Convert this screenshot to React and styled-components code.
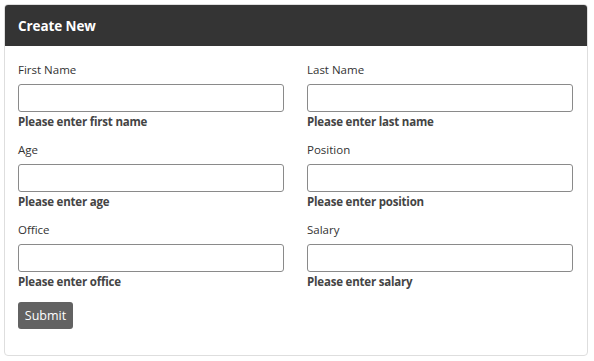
import React from "react";
import styled, { createGlobalStyle } from "styled-components";

const GlobalStyle = createGlobalStyle`
  body {
    margin: 0;
    background: #ffffff;
    font-family: "Open Sans", "Noto Sans", sans-serif;
  }
`;

const Card = styled.div`
  margin: 4px 0 0 4px;
  width: 584px;
  height: 352px;
  box-sizing: border-box;
  border: 1px solid #dedede;
  border-radius: 4px;
  overflow: hidden;
`;

const Header = styled.div`
  height: 41px;
  background: #343434;
  color: #ffffff;
  font-size: 13.5px;
  font-weight: 700;
  letter-spacing: -0.1px;
  display: flex;
  align-items: center;
  padding-left: 13px;
`;

const Body = styled.form`
  padding: 15px 14px 0 13px;
`;

const Grid = styled.div`
  display: grid;
  grid-template-columns: 266px 266px;
  column-gap: 23px;
  row-gap: 11px;
`;

const Field = styled.div`
  display: flex;
  flex-direction: column;
`;

const Label = styled.label`
  font-size: 11.5px;
  line-height: 18px;
  color: #333333;
  margin-bottom: 5px;
`;

const Input = styled.input`
  height: 28px;
  box-sizing: border-box;
  border: 1px solid #8a8a8a;
  border-radius: 3px;
  background: #ffffff;
  font-family: inherit;
  outline: none;
`;

const Error = styled.span`
  font-size: 11.5px;
  line-height: 18px;
  font-weight: 700;
  letter-spacing: -0.2px;
  color: #444444;
  padding-top: 1px;
  margin-bottom: -1px;
`;

const Button = styled.button`
  margin-top: 12px;
  width: 55px;
  height: 27px;
  background: #626262;
  color: #ffffff;
  border: none;
  border-radius: 3px;
  font-family: inherit;
  font-size: 12.5px;
  padding: 0;
`;

const fields = [
  ["First Name", "first name"],
  ["Last Name", "last name"],
  ["Age", "age"],
  ["Position", "position"],
  ["Office", "office"],
  ["Salary", "salary"],
];

export default function App() {
  return (
    <>
      <GlobalStyle />
      <Card>
        <Header>Create New</Header>
        <Body onSubmit={(e) => e.preventDefault()}>
          <Grid>
            {fields.map(([label, hint]) => (
              <Field key={label}>
                <Label>{label}</Label>
                <Input type="text" />
                <Error>Please enter {hint}</Error>
              </Field>
            ))}
          </Grid>
          <Button type="submit">Submit</Button>
        </Body>
      </Card>
    </>
  );
}
